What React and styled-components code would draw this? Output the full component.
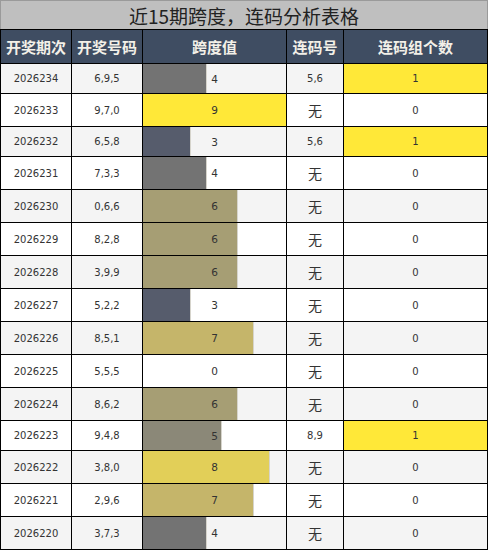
import React from "react";
import styled, { createGlobalStyle } from "styled-components";

const Global = createGlobalStyle`
  html, body { margin: 0; padding: 0; background: #fff; }
  body { font-family: "DejaVu Sans", "Noto Sans CJK SC", sans-serif; }
`;

const Sheet = styled.div`
  width: 488px;
  display: flex;
  flex-direction: column;
`;

const Title = styled.div`
  height: 28px;
  background: #bfbfbf;
  border: 1px solid #9a9a9a;
  border-bottom: none;
  display: flex;
  align-items: center;
  justify-content: center;
  font-family: "Noto Sans CJK SC", sans-serif;
  font-size: 19px;
  color: #222;
  box-sizing: content-box;
`;

const Grid = styled.div`
  display: grid;
  grid-template-columns: 70px 70px 143px 56px 143px;
  gap: 1px;
  padding: 1px;
  background: #000;
`;

const Head = styled.div`
  height: 33px;
  background: #3f4d62;
  color: #f3f0e8;
  font-family: "Noto Sans CJK SC", sans-serif;
  font-weight: 700;
  font-size: 15px;
  display: flex;
  align-items: center;
  justify-content: center;
`;

const Cell = styled.div`
  height: ${(p) => (p.$tall ? 32 : 29)}px;
  background: ${(p) => (p.$hl ? "#ffe838" : p.$odd ? "#f4f4f4" : "#ffffff")};
  color: #333;
  font-size: ${(p) => (p.$cjk ? "14px" : "10px")};
  font-family: ${(p) =>
    p.$cjk ? '"Noto Sans CJK SC", sans-serif' : '"DejaVu Sans", sans-serif'};
  display: flex;
  align-items: center;
  justify-content: center;
`;

const SpanCell = styled(Cell)`
  font-size: 10.5px;
`;

const barColors = {
  3: "#565c6c",
  4: "#737373",
  5: "#8b8878",
  6: "#a69e74",
  7: "#c5b56a",
  8: "#e2cf58",
  9: "#ffe838",
};

const rows = [
  ["2026234", "6,9,5", 4, "5,6", 1],
  ["2026233", "9,7,0", 9, "无", 0],
  ["2026232", "6,5,8", 3, "5,6", 1],
  ["2026231", "7,3,3", 4, "无", 0],
  ["2026230", "0,6,6", 6, "无", 0],
  ["2026229", "8,2,8", 6, "无", 0],
  ["2026228", "3,9,9", 6, "无", 0],
  ["2026227", "5,2,2", 3, "无", 0],
  ["2026226", "8,5,1", 7, "无", 0],
  ["2026225", "5,5,5", 0, "无", 0],
  ["2026224", "8,6,2", 6, "无", 0],
  ["2026223", "9,4,8", 5, "8,9", 1],
  ["2026222", "3,8,0", 8, "无", 0],
  ["2026221", "2,9,6", 7, "无", 0],
  ["2026220", "3,7,3", 4, "无", 0],
];

const headers = ["开奖期次", "开奖号码", "跨度值", "连码号", "连码组个数"];

function barStyle(v, odd) {
  if (!v) return undefined;
  const w = (v / 9) * 143;
  const c = barColors[v];
  const base = odd ? "#f4f4f4" : "#ffffff";
  if (v === 9) return { background: c };
  return {
    background: `linear-gradient(to right, ${c} 0, ${c} ${w - 1}px, #d6d4cc ${
      w - 1
    }px, #d6d4cc ${w}px, ${base} ${w}px)`,
  };
}

export default function App() {
  return (
    <>
      <Global />
      <Sheet>
        <Title>近15期跨度，连码分析表格</Title>
        <Grid>
          {headers.map((h) => (
            <Head key={h}>{h}</Head>
          ))}
          {rows.map(([issue, nums, span, link, count], i) => {
            const odd = i % 2 === 0;
            const tall = link === "无";
            return (
              <React.Fragment key={issue}>
                <Cell $odd={odd} $tall={tall}>{issue}</Cell>
                <Cell $odd={odd} $tall={tall}>{nums}</Cell>
                <SpanCell $odd={odd} $tall={tall} style={barStyle(span, odd)}>
                  {span}
                </SpanCell>
                <Cell $odd={odd} $tall={tall} $cjk={tall}>{link}</Cell>
                <Cell $odd={odd} $tall={tall} $hl={count > 0}>{count}</Cell>
              </React.Fragment>
            );
          })}
        </Grid>
      </Sheet>
    </>
  );
}
